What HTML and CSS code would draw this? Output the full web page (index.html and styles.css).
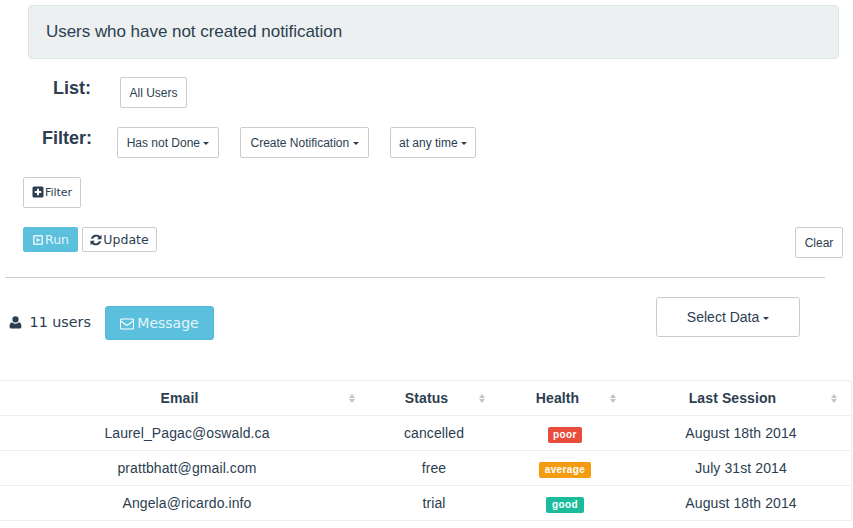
FILE: index.html
```html
<!DOCTYPE html>
<html lang="en">
<head>
    <meta charset="UTF-8">
    <title>Users</title>
    <link rel="stylesheet" href="styles.css">
</head>
<body>
    <div class="well">Users who have not created notification</div>

    <div class="query-row list-row">
        <span class="query-label">List:</span>
        <button class="btn btn-small">All Users</button>
    </div>

    <div class="query-row filter-row">
        <span class="query-label">Filter:</span>
        <button class="btn btn-small">Has not Done <span class="caret"></span></button>
        <button class="btn btn-small">Create Notification <span class="caret"></span></button>
        <button class="btn btn-small">at any time <span class="caret"></span></button>
    </div>

    <div class="add-row">
        <button class="btn btn-add">
            <svg class="icon" viewBox="0 0 12 12"><path fill="#2c3e50" fill-rule="evenodd" d="M2 .5h8A1.500 1.500 0 0 1 11.500 2v8a1.500 1.500 0 0 1-1.500 1.500H2A1.500 1.500 0 0 1 .5 10V2A1.500 1.500 0 0 1 2 .5zM5 2.800V5H2.800v2H5v2.200h2V7h2.200V5H7V2.800z"/></svg>Filter
        </button>
    </div>

    <div class="action-row">
        <button class="btn btn-action btn-run">
            <svg class="icon" viewBox="0 0 12 12"><path fill="#e4f5fa" fill-rule="evenodd" d="M2.500 1h7A1.500 1.500 0 0 1 11 2.500v7A1.500 1.500 0 0 1 9.500 11h-7A1.500 1.500 0 0 1 1 9.500v-7A1.500 1.500 0 0 1 2.500 1zm0 1.500v7h7v-7zM4.500 3.600 8.400 6 4.500 8.400z"/></svg>Run
        </button>
        <button class="btn btn-action">
            <svg class="icon" viewBox="0 0 12 12"><path fill="#2c3e50" d="M11.500.8v4.500H7l1.600-1.600A3.400 3.400 0 0 0 3 4.700H.8a5.500 5.500 0 0 1 9.200-2.400zM.5 11.200V6.700H5L3.400 8.300A3.400 3.400 0 0 0 9 7.300h2.200A5.500 5.500 0 0 1 2 9.700z"/></svg>Update
        </button>
        <button class="btn btn-small btn-clear">Clear</button>
    </div>

    <hr class="divider">

    <div class="summary-row">
        <span class="user-count">
            <svg class="icon" viewBox="0 0 12 12"><path fill="#2c3e50" d="M6 .3a2.900 2.900 0 1 1 0 5.800A2.900 2.900 0 0 1 6 .3zM2.900 5.800C3.700 6.700 4.800 7.200 6 7.200s2.300-.5 3.100-1.400c1.800.2 2.400 1.900 2.400 3.900 0 1.200-.7 1.900-1.800 1.900H2.300C1.200 11.600.5 10.900.5 9.700c0-2 .6-3.700 2.400-3.900z"/></svg>
            11 users
        </span>
        <button class="btn btn-message">
            <svg class="icon" viewBox="0 0 14 12"><path fill="none" stroke="#fff" stroke-width="1.100" d="M1.500 1h11a1 1 0 0 1 1 1v8a1 1 0 0 1-1 1h-11a1 1 0 0 1-1-1V2a1 1 0 0 1 1-1zM.8 3l5 3.800a2 2 0 0 0 2.400 0l5-3.800"/></svg>Message
        </button>
        <button class="btn btn-select">Select Data <span class="caret"></span></button>
    </div>

    <table class="users-table">
        <colgroup>
            <col class="col-email">
            <col class="col-status">
            <col class="col-health">
            <col class="col-session">
        </colgroup>
        <thead>
            <tr>
                <th>Email<span class="sort sort-email"></span></th>
                <th>Status<span class="sort sort-status"></span></th>
                <th>Health<span class="sort sort-health"></span></th>
                <th>Last Session<span class="sort sort-session"></span></th>
            </tr>
        </thead>
        <tbody>
            <tr>
                <td>Laurel_Pagac@oswald.ca</td>
                <td>cancelled</td>
                <td><span class="tag tag-poor">poor</span></td>
                <td>August 18th 2014</td>
            </tr>
            <tr>
                <td>prattbhatt@gmail.com</td>
                <td>free</td>
                <td><span class="tag tag-average">average</span></td>
                <td>July 31st 2014</td>
            </tr>
            <tr>
                <td>Angela@ricardo.info</td>
                <td>trial</td>
                <td><span class="tag tag-good">good</span></td>
                <td>August 18th 2014</td>
            </tr>
        </tbody>
    </table>
</body>
</html>
```

FILE: styles.css
```css
body {
    margin: 0;
    height: 528px;
    overflow: hidden;
    background: #fff;
    color: #2c3e50;
    font-family: "Liberation Sans", Arial, sans-serif;
    font-size: 14px;
}

.well {
    margin: 5px 14px 0 28px;
    height: 54px;
    box-sizing: border-box;
    padding: 0 17px;
    line-height: 51px;
    font-size: 17px;
    letter-spacing: -0.04px;
    background: #ecf0f1;
    border: 1px solid #dfe5e7;
    border-radius: 4px;
}

.btn {
    box-sizing: border-box;
    background: #fff;
    color: #2c3e50;
    border: 1px solid #ccc;
    border-radius: 2px;
    padding: 0;
    font-family: inherit;
    white-space: nowrap;
}

.btn-small {
    height: 31px;
    font-size: 12px;
}

.caret {
    display: inline-block;
    width: 0;
    height: 0;
    vertical-align: middle;
    border-top: 3px solid #2c3e50;
    border-left: 3px solid transparent;
    border-right: 3px solid transparent;
}

.icon {
    width: 12px;
    height: 12px;
    vertical-align: -2px;
    margin-right: 1px;
}

/* Query builder */
.query-row {
    display: flex;
    align-items: flex-start;
}

.query-label {
    padding-top: 1px;
    font-size: 18px;
    font-weight: bold;
    line-height: 21px;
}

.list-row {
    margin-top: 18px;
    padding-left: 53px;
}

.list-row .query-label {
    width: 67px;
}

.list-row .btn {
    width: 67px;
}

.filter-row {
    margin-top: 19px;
    padding-left: 42px;
}

.filter-row .query-label {
    width: 75px;
}

.filter-row .btn:nth-of-type(1) {
    width: 102px;
}

.filter-row .btn:nth-of-type(2) {
    width: 129px;
    margin-left: 21px;
}

.filter-row .btn:nth-of-type(3) {
    width: 86px;
    margin-left: 21px;
}

.add-row {
    margin-top: 19px;
    padding-left: 23px;
    display: flex;
}

.btn-add {
    width: 58px;
    height: 31px;
    font-family: "DejaVu Sans", sans-serif;
    font-size: 11px;
}

.action-row {
    margin-top: 19px;
    padding: 0 10px 0 23px;
    display: flex;
    align-items: flex-start;
    gap: 4px;
}

.btn-action {
    height: 25px;
    width: 75px;
    font-family: "DejaVu Sans", sans-serif;
    font-size: 12.500px;
}

.btn-run {
    width: 55px;
    color: #e4f5fa;
    background: #5bc0de;
    border-color: #5bc0de;
}

.btn-clear {
    width: 48px;
    margin-left: auto;
}

.divider {
    margin: 19px 28px 0 5px;
    border: 0;
    border-top: 1px solid #ccc;
}

/* Result summary */
.summary-row {
    margin-top: 19px;
    height: 43px;
    display: flex;
    align-items: flex-start;
}

.user-count {
    margin: 17px 0 0 9px;
    width: 96px;
    font-family: "DejaVu Sans", sans-serif;
    font-size: 14.300px;
    white-space: nowrap;
}

.user-count .icon {
    width: 13px;
    height: 13px;
    margin-right: 3px;
}

.btn-message {
    width: 109px;
    height: 34px;
    margin-top: 9px;
    border-radius: 3px;
    font-family: "DejaVu Sans", sans-serif;
    font-size: 14px;
    color: #e4f5fa;
    background: #5bc0de;
    border-color: #55b8d6;
}

.btn-message .icon {
    width: 14px;
    margin-right: 3px;
}

.btn-select {
    width: 144px;
    height: 40px;
    margin-left: 442px;
    border-radius: 3px;
    font-size: 14px;
}

/* Table */
.users-table {
    margin-top: 40px;
    width: 852px;
    table-layout: fixed;
    border-collapse: separate;
    border-spacing: 0;
    border-top: 1px solid #ecf0f1;
    border-right: 1px solid #ecf0f1;
    border-radius: 0 4px 0 0;
}

.col-email {
    width: 374px;
}

.col-status {
    width: 120px;
}

.col-health {
    width: 142px;
}

.users-table th,
.users-table td {
    height: 35px;
    box-sizing: border-box;
    padding: 0;
    text-align: center;
    letter-spacing: 0.1px;
    border-bottom: 1px solid #ecf0f1;
}

.users-table td:last-child {
    padding-right: 5px;
}

.users-table th {
    position: relative;
    padding-right: 15px;
    font-size: 14px;
}

.users-table th:last-child {
    padding-right: 22px;
}

.sort {
    position: absolute;
    top: 13px;
    width: 6px;
    height: 9px;
}

.sort::before,
.sort::after {
    content: "";
    position: absolute;
    left: 0;
    border-left: 3px solid transparent;
    border-right: 3px solid transparent;
}

.sort::before {
    top: 0;
    border-bottom: 4px solid #c4c4c4;
}

.sort::after {
    bottom: 0;
    border-top: 4px solid #c4c4c4;
}

.sort-email {
    right: 19px;
}

.sort-status {
    right: 9px;
}

.sort-health {
    right: 20px;
}

.sort-session {
    right: 14px;
}

.tag {
    display: inline-block;
    box-sizing: border-box;
    height: 16px;
    padding: 0 5.500px;
    margin-top: 3px;
    vertical-align: middle;
    line-height: 16px;
    font-size: 10px;
    font-weight: bold;
    letter-spacing: 0.4px;
    color: #fff;
    border-radius: 2px;
}

.tag-poor {
    background: #e74c3c;
}

.tag-average {
    background: #f39c12;
}

.tag-good {
    background: #1abc9c;
}
```
